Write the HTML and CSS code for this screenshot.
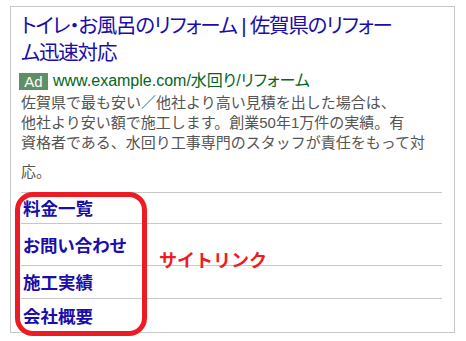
FILE: index.html
```html
<!DOCTYPE html>
<html>
<head>
  <title>サイトリンク表示例</title>
  <meta name="viewport" content="width=device-width, initial-scale=1">
  <link rel="stylesheet" href="styles.css">
</head>
<body>
  <div class="page">
    <div class="ad">
      <h1 class="title">トイレ・お風呂のリフォーム | 佐賀県のリフォー<br>ム迅速対応</h1>
      <div class="url-row">
        <span class="badge">Ad</span>
        <span class="url">www.example.com/水回り/リフォーム</span>
      </div>
      <div class="desc">
        <span class="line">佐賀県で最も安い／他社より高い見積を出した場合は、</span>
        <span class="line">他社より安い額で施工します。創業50年1万件の実績。有</span>
        <span class="line">資格者である、水回り工事専門のスタッフが責任をもって対</span>
        <span class="line last">応。</span>
      </div>
      <ul class="sitelinks">
        <li><a href="#">料金一覧</a></li>
        <li><a href="#">お問い合わせ</a></li>
        <li><a href="#">施工実績</a></li>
        <li><a href="#">会社概要</a></li>
      </ul>
    </div>

    <!-- annotation drawn over the ad -->
    <div class="callout-frame"></div>
    <div class="callout-label">サイトリンク</div>
  </div>
</body>
</html>
```

FILE: styles.css
```css
body { margin: 0; background: #fff; }
.page { position: relative; width: 466px; height: 341px; overflow: hidden; }

.ad { margin: 6px 0 0 10px; width: 445px; height: 327px; box-sizing: border-box; border: 1px solid #c8c8c8; padding: 5px 12px 0 10px; font-family: "Liberation Sans", "Noto Sans CJK JP", sans-serif; font-feature-settings: "palt"; }

.title { margin: 0 0 4px; font-size: 20.5px; line-height: 27px; font-weight: normal; letter-spacing: -1.2px; color: #1a0dab; white-space: nowrap; }

.url-row { display: flex; align-items: center; height: 22px; gap: 5px; }
.badge { margin-left: -2px; width: 29px; height: 17px; background: #5e8f66; color: #fff; font-family: "Liberation Sans", sans-serif; font-size: 15px; line-height: 17px; text-align: center; }
.url { color: #006621; font-size: 16px; line-height: 22px; }

.desc { margin: 1px 0 10px; color: #545454; font-size: 15px; line-height: 20px; font-feature-settings: normal; }
.desc .line { display: block; white-space: nowrap; }
.desc .last { margin-top: 9px; }

.sitelinks { list-style: none; margin: 0; padding: 0; display: grid; grid-template-rows: 31px 42px 33px 34px; }
.sitelinks li { display: flex; align-items: center; border-top: 1px solid #c8c8c8; padding-left: 2px; }
.sitelinks a { color: #1a0dab; font-family: "Noto Sans CJK JP", sans-serif; font-size: 17.5px; font-weight: bold; line-height: 1; text-decoration: none; }

.callout-frame { position: absolute; left: 15px; top: 192px; width: 132px; height: 144px; box-sizing: border-box; border: 5px solid #ed1c24; border-radius: 18px; }
.callout-label { position: absolute; left: 159px; top: 250px; color: #ed1c24; font-family: "Noto Sans CJK JP", sans-serif; font-size: 18px; font-weight: bold; line-height: 18px; }
```
